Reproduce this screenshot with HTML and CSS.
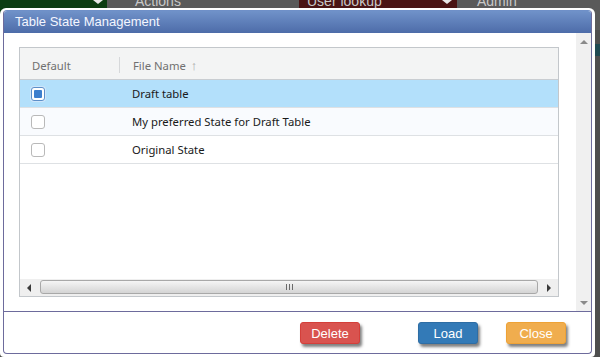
FILE: index.html
```html
<!DOCTYPE html>
<html lang="en">
<head>
    <meta charset="UTF-8">
    <title>Table State Management</title>
    <link rel="stylesheet" href="styles.css">
</head>
<body>
    <!-- page behind the dialog -->
    <nav class="topnav">
        <div class="nav-item nav-green"><span class="caret"></span></div>
        <div class="nav-item nav-grey nav-actions">Actions</div>
        <div class="nav-item nav-red">User lookup<span class="caret"></span></div>
        <div class="nav-item nav-grey">Admin</div>
    </nav>
    <div class="page-side">
        <div class="side-band"></div>
    </div>

    <div class="modal">
        <div class="panel">
            <div class="title">Table State Management</div>
            <div class="modal-body">
                <div class="content">
                    <div class="grid">
                        <div class="grid-head">
                            <div class="col-default">Default</div>
                            <div class="col-sep"></div>
                            <div class="col-name">File Name <span class="sort">&#8593;</span></div>
                        </div>
                        <div class="grid-row selected">
                            <div class="col-default"><span class="check checked"></span></div>
                            <div class="col-name">Draft table</div>
                        </div>
                        <div class="grid-row alt">
                            <div class="col-default"><span class="check"></span></div>
                            <div class="col-name">My preferred State for Draft Table</div>
                        </div>
                        <div class="grid-row">
                            <div class="col-default"><span class="check"></span></div>
                            <div class="col-name">Original State</div>
                        </div>
                        <div class="grid-fill"></div>
                        <div class="hscroll">
                            <div class="hbtn"><span class="arr-left"></span></div>
                            <div class="thumb"><span class="grip"></span></div>
                            <div class="hbtn"><span class="arr-right"></span></div>
                        </div>
                    </div>
                </div>
                <div class="vscroll">
                    <span class="arr-up"></span>
                    <span class="arr-down"></span>
                </div>
            </div>
            <div class="footer">
                <button class="btn btn-delete">Delete</button>
                <button class="btn btn-load">Load</button>
                <button class="btn btn-close">Close</button>
            </div>
        </div>
    </div>
</body>
</html>
```

FILE: styles.css
```css
body {
    margin: 0;
    width: 600px;
    height: 357px;
    overflow: hidden;
    background-color: #4e4e4e;
    font-family: "Liberation Sans", Arial, sans-serif;
    position: relative;
}
.topnav {
    display: flex;
    height: 30px;
}
.nav-item {
    color: #c8c8c8;
    font-size: 14px;
    line-height: 2px;
    padding-left: 28px;
    position: relative;
}
.nav-green {
    width: 107px;
    padding-left: 0;
    background-color: #0c3d12;
}
.nav-grey {
    background-color: #5a5a5a;
}
.nav-actions {
    width: 164px;
}
.nav-red {
    width: 150px;
    padding-left: 8px;
    background-color: #4a1414;
}
.nav-grey:last-child {
    flex: 1;
    padding-left: 20px;
}
.caret {
    position: absolute;
    top: 0;
    right: 4px;
    border-left: 5px solid transparent;
    border-right: 5px solid transparent;
    border-top: 4px solid #e8e8e8;
}
.nav-red .caret {
    right: 5px;
}
.page-side {
    height: 327px;
}
.side-band {
    margin-top: 14px;
    height: 12px;
    background-color: #1f4a52;
}

/* dialog */
.modal {
    position: absolute;
    left: 0;
    top: 8px;
    width: 595px;
    height: 349px;
    box-sizing: border-box;
    padding: 2px 3px 3px 3px;
    background-color: #fff;
    border-radius: 6px 6px 4px 4px;
}
.panel {
    height: 100%;
    box-sizing: border-box;
    border: 1px solid #6d6b9c;
    border-top-color: #6f90c8;
    border-radius: 4px;
    display: flex;
    flex-direction: column;
    overflow: hidden;
}
.title {
    height: 22px;
    line-height: 21px;
    padding-left: 11px;
    color: #f4f6ff;
    font-size: 13px;
    background: linear-gradient(#7092c9, #4d6ca9);
}
.modal-body {
    height: 278px;
    display: flex;
}
.content {
    flex: 1;
    padding: 14px 0 0 15px;
}
.grid {
    width: 540px;
    height: 250px;
    box-sizing: border-box;
    border: 1px solid #c3c7cb;
    display: flex;
    flex-direction: column;
    font-family: "Noto Sans", sans-serif;
    font-size: 11.3px;
    color: #1a1a1a;
}
.grid-head {
    height: 28px;
    padding-top: 3px;
    border-bottom: 1px solid #c9cdd1;
    background-color: #f3f4f4;
    color: #707070;
    display: flex;
    align-items: center;
}
.col-default {
    width: 88px;
    padding-left: 11px;
    display: flex;
    align-items: center;
}
.grid-head .col-default {
    padding-left: 12px;
    width: 87px;
}
.col-sep {
    width: 1px;
    height: 16px;
    background-color: #d6d8da;
}
.col-name {
    padding-left: 12px;
}
.grid-head .col-name {
    padding-left: 13px;
}
.sort {
    color: #a8a8a8;
    font-size: 13px;
    margin-left: 2px;
}
.grid-row {
    height: 27px;
    border-bottom: 1px solid #dee1e4;
    display: flex;
    align-items: center;
}
.grid-row .col-name {
    padding-left: 13px;
}
.selected {
    background-color: #b3e0fb;
}
.alt {
    background-color: #f9fbfe;
}
.check {
    width: 12px;
    height: 12px;
    border: 1px solid #b9b9b9;
    border-radius: 3px;
    background-color: #fff;
    position: relative;
}
.checked {
    border-color: #5d8fc9;
    box-shadow: 0 0 0 1px #cfe6fa;
}
.checked::after {
    content: "";
    position: absolute;
    left: 2px;
    top: 2px;
    width: 8px;
    height: 8px;
    border-radius: 1px;
    background-color: #3e7fcd;
}
.grid-fill {
    flex: 1;
}
.hscroll {
    height: 17px;
    display: flex;
    background-color: #efefef;
}
.hbtn {
    width: 19px;
    display: flex;
    align-items: center;
    justify-content: center;
}
.arr-left {
    margin-right: 2px;
    border-top: 4px solid transparent;
    border-bottom: 4px solid transparent;
    border-right: 4px solid #3a3a3a;
}
.arr-right {
    border-top: 4px solid transparent;
    border-bottom: 4px solid transparent;
    border-left: 4px solid #3a3a3a;
}
.thumb {
    flex: 1;
    margin: 1px 1px 2px 1px;
    border: 1px solid #a8a8a8;
    border-radius: 3px;
    background: linear-gradient(#f5f5f5, #d4d4d4);
    display: flex;
    align-items: center;
    justify-content: center;
}
.grip {
    width: 7px;
    height: 6px;
    background: repeating-linear-gradient(90deg, #6a6a6a 0 1px, transparent 1px 3px);
}
.vscroll {
    width: 15px;
    background-color: #f0f0f0;
    display: flex;
    flex-direction: column;
    align-items: center;
    justify-content: space-between;
    padding: 7px 0 6px;
    box-sizing: border-box;
}
.arr-up {
    border-left: 4px solid transparent;
    border-right: 4px solid transparent;
    border-bottom: 4px solid #8a8a8a;
}
.arr-down {
    border-left: 4px solid transparent;
    border-right: 4px solid transparent;
    border-top: 4px solid #8a8a8a;
}
.footer {
    flex: 1;
    border-top: 1px solid #6d6b9c;
    display: flex;
    justify-content: flex-end;
    align-items: flex-start;
    padding: 10px 25px 0 0;
}
.btn {
    width: 60px;
    height: 22px;
    padding: 0;
    border-radius: 3px;
    border: 1px solid;
    color: #fff;
    font-family: "Liberation Sans", Arial, sans-serif;
    font-size: 13px;
    box-shadow: 2px 3px 3px rgba(0, 0, 0, 0.5);
}
.btn-delete {
    background-color: #d9534f;
    border-color: #d43f3a;
    margin-right: 58px;
}
.btn-load {
    background-color: #337ab7;
    border-color: #2e6da4;
    margin-right: 28px;
}
.btn-close {
    background-color: #f0ad4e;
    border-color: #eea236;
}
```
